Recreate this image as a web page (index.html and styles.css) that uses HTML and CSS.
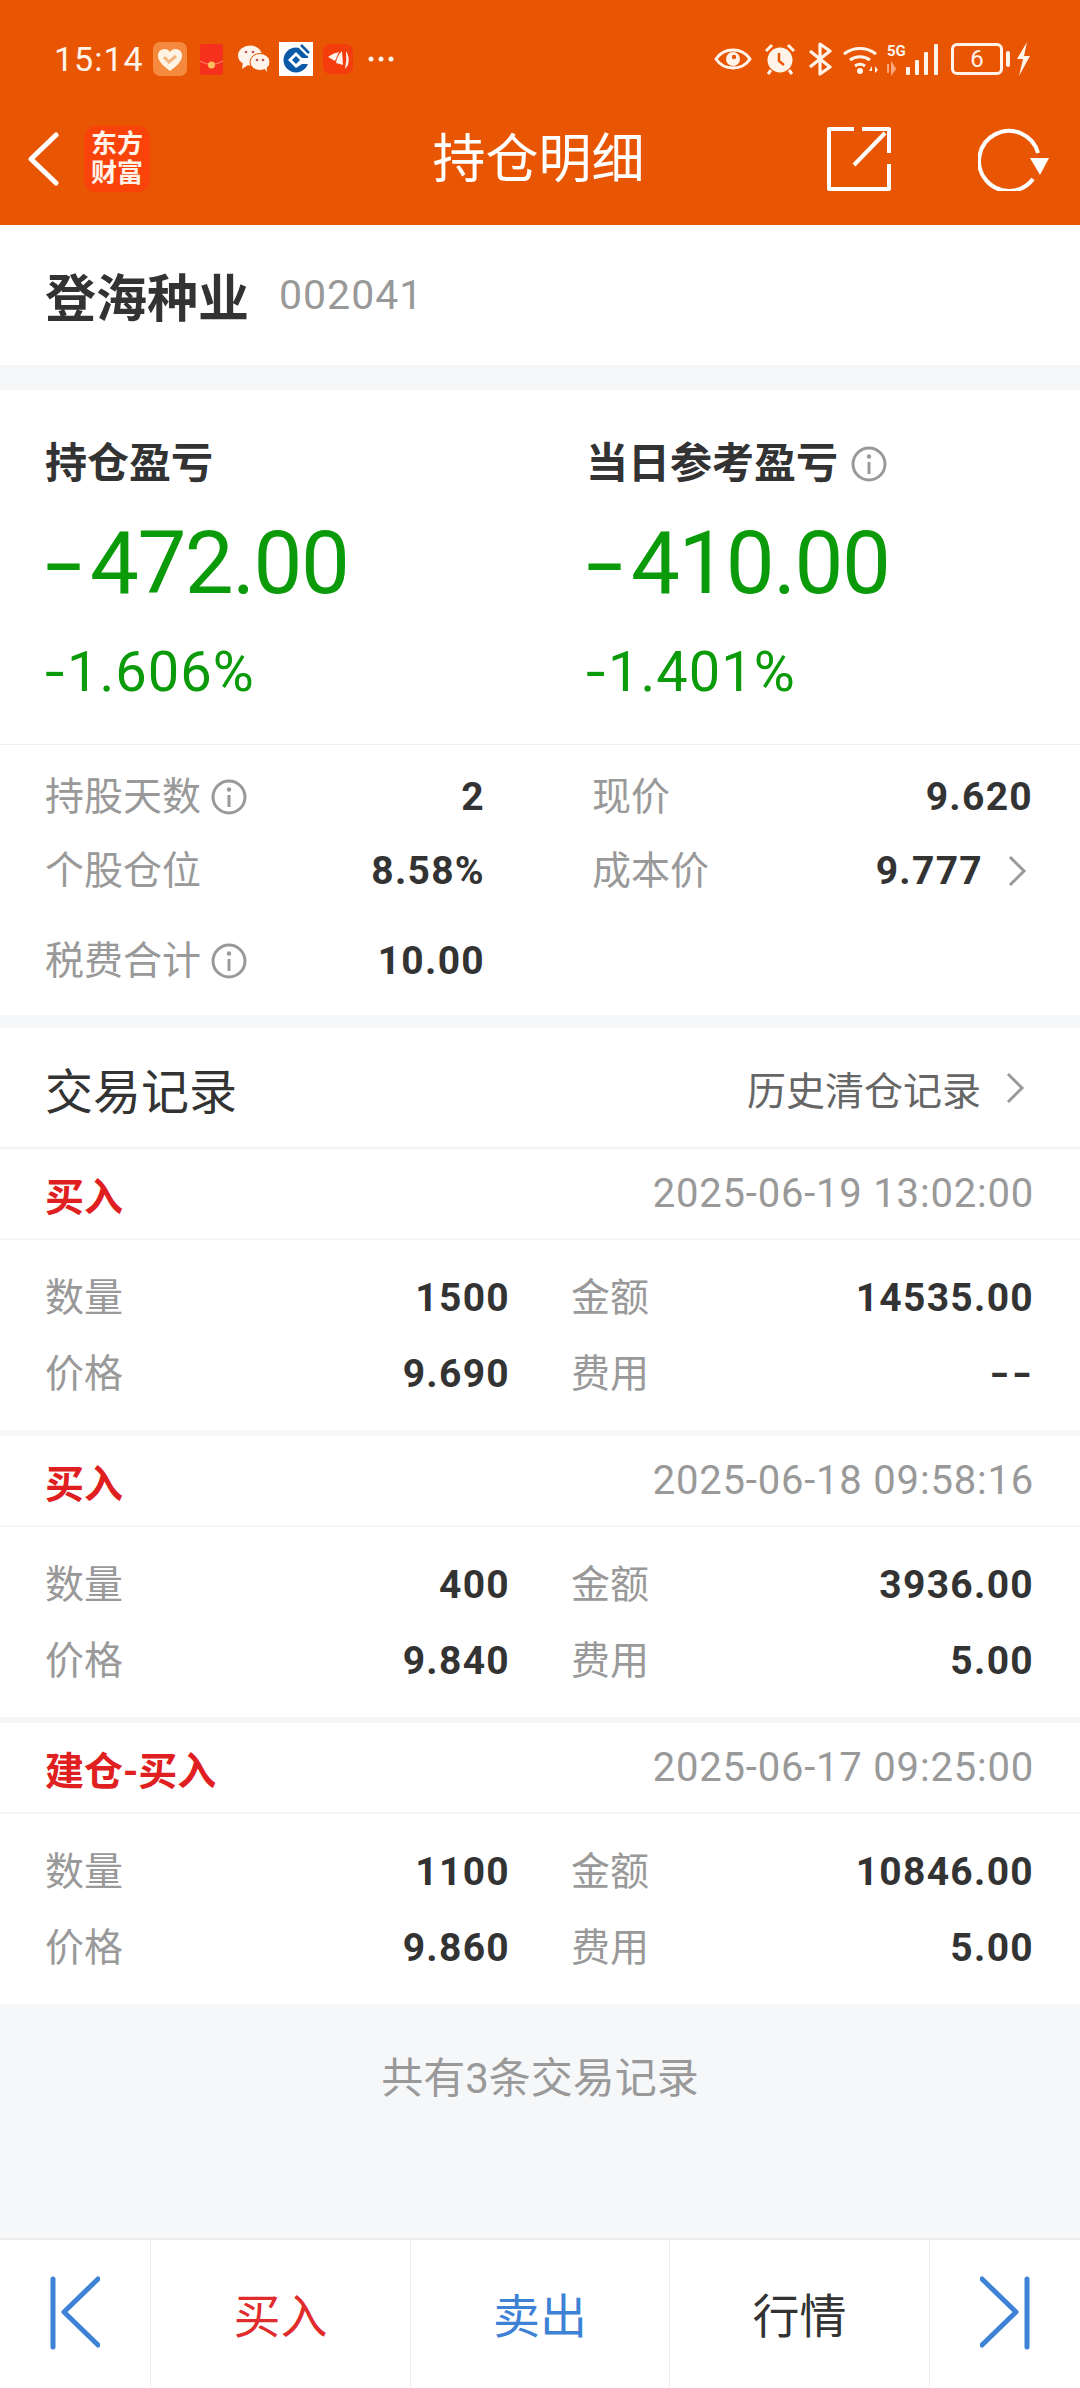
FILE: index.html
```html
<!DOCTYPE html>
<html lang="zh-CN">
<head>
<meta charset="utf-8">
<title>持仓明细</title>
<link rel="stylesheet" href="styles.css">
</head>
<body>
<div class="page">
  <header class="top">
    <div class="status">
      <span class="time">15:14</span>
      <svg class="si" width="34" height="34" viewBox="0 0 34 34"><rect width="34" height="34" rx="7" fill="#f58a3f"/><path d="M17 29C9 23 5 19 5 13a6.5 6.5 0 0 1 12-3 6.5 6.5 0 0 1 12 3c0 6-4 10-12 16z" fill="#fff3e4"/><path d="M11 15l5 5 7-6" fill="none" stroke="#f3b67e" stroke-width="3"/></svg>
      <svg class="si g1" width="23" height="31" viewBox="0 0 23 31"><rect width="23" height="31" rx="3" fill="#f5301c"/><path d="M0 17q11 7 23 0" fill="none" stroke="#ff8a70" stroke-width="1"/><circle cx="11.500" cy="21" r="3.500" fill="#f8c060"/></svg>
      <svg class="si g2" width="32" height="28" viewBox="0 0 32 28"><ellipse cx="12" cy="10.500" rx="12" ry="10" fill="#fff3ea"/><path d="M5 17l-1 7 6-4z" fill="#fff3ea"/><ellipse cx="22" cy="17" rx="10" ry="8.500" fill="#fff3ea" stroke="#e85604"/><path d="M26 23l3 4-.5-6z" fill="#fff3ea"/><circle cx="8" cy="7" r="1.300" fill="#b55"/><circle cx="15" cy="7" r="1.300" fill="#b55"/><circle cx="19" cy="15" r="1.300" fill="#b55"/><circle cx="25" cy="15" r="1.300" fill="#b55"/></svg>
      <svg class="si g3" width="34" height="34" viewBox="0 0 34 34"><rect width="34" height="34" fill="#fff"/><circle cx="17" cy="18" r="12.500" fill="#0b5aa8"/><path d="M9 18l8-8 6 6h8v6h-8l-6 4z" fill="#fff"/><path d="M13 18l4-4 4 4-4 4z" fill="#0b5aa8"/><path d="M20 4l9 9" stroke="#fff" stroke-width="3"/><path d="M22 3l8 8" stroke="#0b5aa8" stroke-width="2.500"/></svg>
      <svg class="si g4" width="30" height="30" viewBox="0 0 30 30"><rect width="30" height="30" rx="7" fill="#f53c0c"/><path d="M5 13q5-4 11-5l-4 9zM13 19q1-7 6-12l1 14zM22 25q2-9 1-18 4 6 2 14z" fill="#fff3ea"/></svg>
      <svg class="si g5" width="26" height="6" viewBox="0 0 26 6"><circle cx="3" cy="3" r="2.500" fill="#fff3ea"/><circle cx="13" cy="3" r="2.500" fill="#fff3ea"/><circle cx="23" cy="3" r="2.500" fill="#fff3ea"/></svg>
      <span class="spacer"></span>
      <svg class="si" width="38" height="26" viewBox="0 0 38 26"><path d="M2 13C10 1 28 1 36 13 28 25 10 25 2 13z" fill="none" stroke="#fff3ea" stroke-width="3"/><circle cx="19" cy="13" r="7" fill="#fff3ea"/><circle cx="20" cy="11" r="2.200" fill="#e85604"/></svg>
      <svg class="si g6" width="32" height="32" viewBox="0 0 32 32"><circle cx="16" cy="17" r="12.500" fill="#fff3ea"/><path d="M2 8l6-6M30 8l-6-6M7 27l-3 4M25 27l3 4" stroke="#fff3ea" stroke-width="3"/><path d="M15 10v8l5 4" fill="none" stroke="#e85604" stroke-width="2.500"/></svg>
      <svg class="si g7" width="24" height="34" viewBox="0 0 24 34"><path d="M2 9l20 16-10 7V2l10 7L2 25" fill="none" stroke="#fff3ea" stroke-width="3.200" stroke-linejoin="round"/></svg>
      <svg class="si g8" width="64" height="34" viewBox="0 0 64 34"><path d="M2 12a26 26 0 0 1 32 0M8 18a17 17 0 0 1 20 0M13 24a9 9 0 0 1 10 0" fill="none" stroke="#fff3ea" stroke-width="3"/><circle cx="18" cy="29" r="3" fill="#fff3ea"/><path d="M30 31v-7l-3 5h3zM33 24v7l3-3z" fill="#fff3ea"/><text class="fiveg" x="45" y="14">5G</text><path d="M46 22v9M50 31v-9l3 5z" stroke="#f9a67a" stroke-width="2" fill="#f9a67a"/></svg>
      <svg class="si" width="33" height="32" viewBox="0 0 33 32"><rect x="0" y="24" width="4" height="8" rx="1" fill="#fff3ea"/><rect x="9" y="17" width="4" height="15" rx="1" fill="#fff3ea"/><rect x="18" y="9" width="4" height="23" rx="1" fill="#fff3ea"/><rect x="28" y="1" width="4" height="31" rx="1" fill="#fff3ea"/></svg>
      <div class="batt"><span>6</span></div>
      <span class="nub"></span>
      <svg class="si g9" width="15" height="34" viewBox="0 0 15 34"><path d="M11 0L1 17h6L3 34 14 14H8z" fill="#fff3ea"/></svg>
    </div>
    <nav class="nav">
      <div class="nav-l">
        <svg width="32" height="54" viewBox="0 0 32 54"><path d="M29 3L4 27l25 24" fill="none" stroke="#fff" stroke-width="5" stroke-linecap="round" stroke-linejoin="round"/></svg>
        <div class="logo"><span>东方</span><span>财富</span></div>
      </div>
      <h1 class="title">持仓明细</h1>
      <div class="nav-r">
        <svg width="64" height="64" viewBox="0 0 64 64"><path d="M27 2H2v60h60V37M35 2h27v24M58 6L27 38" fill="none" stroke="#fff" stroke-width="4" stroke-linejoin="round"/></svg>
        <svg class="refresh" width="72" height="64" viewBox="0 0 72 64"><path d="M60 26A30 30 0 1 0 55 52" fill="none" stroke="#fff" stroke-width="4"/><path d="M52 31h19l-9 17z" fill="#fff"/></svg>
      </div>
    </nav>
  </header>

  <section class="stock">
    <span class="stock-name">登海种业</span>
    <span class="stock-code">002041</span>
  </section>

  <section class="card">
    <div class="pl">
      <div class="pl-col">
        <div class="pl-label">持仓盈亏</div>
        <div class="pl-big"><span class="sign">-</span>472.00</div>
        <div class="pl-pct"><span class="sign-s">-</span>1.606%</div>
      </div>
      <div class="pl-col">
        <div class="pl-label">当日参考盈亏<svg class="info info-s" viewBox="0 0 36 36"><circle cx="18" cy="18" r="16" fill="none" stroke="#999" stroke-width="3"/><circle cx="18" cy="10.500" r="2.200" fill="#999"/><path d="M18 16v12" stroke="#999" stroke-width="3"/></svg></div>
        <div class="pl-big"><span class="sign">-</span>410.00</div>
        <div class="pl-pct"><span class="sign-s">-</span>1.401%</div>
      </div>
    </div>
    <div class="stats">
      <div class="stat">
        <span class="lab">持股天数</span>
        <svg class="info" viewBox="0 0 36 36"><circle cx="18" cy="18" r="16" fill="none" stroke="#999" stroke-width="3"/><circle cx="18" cy="10.500" r="2.200" fill="#999"/><path d="M18 16v12" stroke="#999" stroke-width="3"/></svg>
        <span class="val">2</span>
      </div>
      <div class="stat">
        <span class="lab">现价</span>
        <span class="val">9.620</span>
      </div>
      <div class="stat">
        <span class="lab">个股仓位</span>
        <span class="val">8.58%</span>
      </div>
      <div class="stat">
        <span class="lab">成本价</span>
        <span class="val">9.777</span>
        <svg class="chev chev-in" width="20" height="32" viewBox="0 0 20 32"><path d="M3 2l14 14L3 30" fill="none" stroke="#999" stroke-width="3"/></svg>
      </div>
      <div class="stat stat-last">
        <span class="lab">税费合计</span>
        <svg class="info" viewBox="0 0 36 36"><circle cx="18" cy="18" r="16" fill="none" stroke="#999" stroke-width="3"/><circle cx="18" cy="10.500" r="2.200" fill="#999"/><path d="M18 16v12" stroke="#999" stroke-width="3"/></svg>
        <span class="val">10.00</span>
      </div>
    </div>
  </section>

  <section class="trades-head">
    <span class="trades-title">交易记录</span>
    <span class="hist">历史清仓记录</span>
    <svg class="chev" width="20" height="32" viewBox="0 0 20 32"><path d="M3 2l14 14L3 30" fill="none" stroke="#999" stroke-width="3"/></svg>
  </section>

  <article class="rec">
    <div class="rec-head"><span class="rec-type">买入</span><span class="rec-time">2025-06-19 13:02:00</span></div>
    <div class="rec-body">
      <div class="cell"><span class="lab">数量</span><span class="val">1500</span></div>
      <div class="cell"><span class="lab">金额</span><span class="val">14535.00</span></div>
      <div class="cell"><span class="lab">价格</span><span class="val">9.690</span></div>
      <div class="cell"><span class="lab">费用</span><span class="val val-dash">--</span></div>
    </div>
  </article>
  <article class="rec">
    <div class="rec-head"><span class="rec-type">买入</span><span class="rec-time">2025-06-18 09:58:16</span></div>
    <div class="rec-body">
      <div class="cell"><span class="lab">数量</span><span class="val">400</span></div>
      <div class="cell"><span class="lab">金额</span><span class="val">3936.00</span></div>
      <div class="cell"><span class="lab">价格</span><span class="val">9.840</span></div>
      <div class="cell"><span class="lab">费用</span><span class="val">5.00</span></div>
    </div>
  </article>
  <article class="rec rec-end">
    <div class="rec-head"><span class="rec-type">建仓-买入</span><span class="rec-time">2025-06-17 09:25:00</span></div>
    <div class="rec-body">
      <div class="cell"><span class="lab">数量</span><span class="val">1100</span></div>
      <div class="cell"><span class="lab">金额</span><span class="val">10846.00</span></div>
      <div class="cell"><span class="lab">价格</span><span class="val">9.860</span></div>
      <div class="cell"><span class="lab">费用</span><span class="val">5.00</span></div>
    </div>
  </article>

  <div class="total">共有3条交易记录</div>

  <footer class="bar">
    <div class="bar-cell"><svg width="50" height="74" viewBox="0 0 50 74"><path d="M3 3v68M48 3L14 36l34 33" fill="none" stroke="#3d82d4" stroke-width="5" stroke-linecap="round" stroke-linejoin="round"/></svg></div>
    <div class="bar-cell bar-buy">买入</div>
    <div class="bar-cell bar-sell">卖出</div>
    <div class="bar-cell bar-quote">行情</div>
    <div class="bar-cell"><svg width="50" height="74" viewBox="0 0 50 74"><path d="M47 3v68M2 3l34 33L2 69" fill="none" stroke="#3d82d4" stroke-width="5" stroke-linecap="round" stroke-linejoin="round"/></svg></div>
  </footer>
</div>
</body>
</html>
```

FILE: styles.css
```css
* { box-sizing: border-box; }
html, body { margin: 0; padding: 0; }
body {
  width: 1080px;
  background: #f6f7f9;
  color: #333;
  font-family: Roboto, "Noto Sans CJK SC", sans-serif;
}
.page { display: flex; flex-direction: column; height: 2388px; overflow: hidden; }

.top { height: 225px; background: #e85604; color: #fff; flex: none; }
.status { display: flex; align-items: center; height: 70px; padding: 0 49px 0 54px; margin-bottom: 1px; transform: translateY(24px); }
.time { font-size: 34px; width: 99px; color: #fff3ea; letter-spacing: 1px; }
.si { flex: none; display: block; }
.g1 { margin-left: 13px; }
.g2 { margin-left: 15px; }
.g3 { margin-left: 9px; }
.g4 { margin-left: 10px; }
.g5 { margin-left: 15px; }
.spacer { flex: 1; }
.g6 { margin-left: 12px; }
.g7 { margin-left: 12px; }
.g8 { margin-left: 10px; }
.fiveg { font-size: 15px; font-weight: 700; fill: #fff3ea; font-family: Roboto, sans-serif; }
.batt { width: 52px; height: 32px; margin-left: 12px; border: 3px solid #fff3ea; border-radius: 6px; display: flex; align-items: center; justify-content: center; font-size: 24px; color: #fff3ea; }
.nub { width: 4px; height: 16px; margin-left: 3px; background: #fff3ea; border-radius: 2px; }
.g9 { margin-left: 6px; }

.nav { display: flex; align-items: center; height: 130px; margin-top: 24px; }
.nav-l { flex: 1; display: flex; align-items: center; padding-left: 27px; gap: 25px; }
.logo { width: 66px; height: 66px; border-radius: 12px; background: #f9430b; display: flex; flex-direction: column; align-items: center; justify-content: center; font-size: 26px; line-height: 29px; font-weight: 700; color: #fff3ea; }
.title { margin: 0; padding-top: 2px; font-size: 53px; font-weight: 400; line-height: 70px; }
.nav-r { flex: 1; display: flex; align-items: center; justify-content: flex-end; padding-right: 30px; }
.refresh { margin-left: 87px; }

.stock { height: 140px; background: #fff; flex: none; display: flex; align-items: center; padding-left: 45px; }
.stock-name { font-size: 51px; font-weight: 700; }
.stock-code { font-size: 41px; color: #999; margin-left: 30px; letter-spacing: 1px; }

.card { margin-top: 25px; background: #fff; flex: none; }
.pl { display: flex; padding: 44px 0 37px 45px; border-bottom: 1px solid #f1f1f1; }
.pl-col { flex: none; width: 541px; }
.pl-label { display: flex; align-items: center; font-size: 42px; font-weight: 700; line-height: 60px; }
.pl-big { margin-top: 14px; font-size: 87px; line-height: 110px; color: #0a9a0a; letter-spacing: -1.500px; }
.sign { display: inline-block; width: 45px; transform: scaleX(1.55); transform-origin: left center; }
.sign-s { display: inline-block; width: 22px; transform: scaleX(1.25); transform-origin: left center; }
.pl-pct { margin-top: 19px; font-size: 56px; line-height: 70px; color: #0a9a0a; letter-spacing: 1px; }

.stats { display: grid; grid-template-columns: 440px 441px; column-gap: 107px; padding: 15px 46px 17px 45px; }
.stat { display: flex; align-items: center; height: 74px; }
.stat-last { margin-top: 16px; }
.lab { font-size: 39px; color: #999; line-height: 50px; }
.val { margin-left: auto; font-size: 39px; font-weight: 700; color: #333; letter-spacing: 1.300px; }
.val-dash { transform: scaleX(1.35); transform-origin: right center; }
.info { width: 36px; height: 36px; margin-left: 10px; flex: none; }
.info-s { margin-left: 13px; }
.chev-in { margin: 0 6px 0 24px; }

.trades-head { margin-top: 13px; height: 121px; background: #fff; border-bottom: 2px solid #f4f4f4; display: flex; align-items: center; padding: 0 55px 0 45px; flex: none; }
.trades-title { font-size: 48px; }
.hist { margin-left: auto; font-size: 39px; color: #666; }
.trades-head .chev { margin-left: 24px; }

.rec { background: #fff; margin-bottom: 6px; flex: none; }
.rec-end { margin-bottom: 0; }
.rec-head { height: 91px; display: flex; align-items: center; justify-content: space-between; padding: 0 46px 0 45px; border-bottom: 2px solid #f6f6f6; }
.rec-type { font-size: 39px; font-weight: 700; color: #e02020; }
.rec-time { font-size: 40px; color: #999; letter-spacing: .8px; }
.rec-body { height: 190px; padding: 20px 46px 18px 45px; display: grid; grid-template-columns: 465px 463px; column-gap: 61px; grid-auto-rows: 76px; }
.cell { display: flex; align-items: center; }

.total { flex: 1; padding-top: 50px; font-size: 42px; line-height: 50px; color: #999; text-align: center; }

.bar { flex: none; height: 150px; background: #fff; border-top: 2px solid #ececec; display: grid; grid-template-columns: 150px 260px 259px 260px 151px; }
.bar-cell { display: flex; align-items: center; justify-content: center; padding-bottom: 3px; font-size: 47px; border-left: 1px solid #ececec; }
.bar-cell:first-child { border-left: 0; }
.bar-buy { color: #e02c2c; }
.bar-sell { color: #3d82d4; }
.bar-quote { color: #333; }
```
